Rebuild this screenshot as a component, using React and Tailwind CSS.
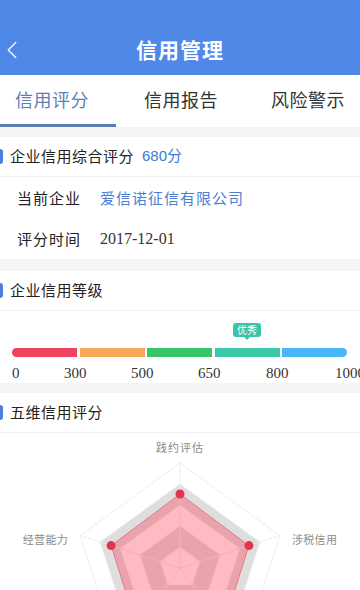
import { ChevronLeft } from "lucide-react";

const cjk = "font-['Noto_Sans_CJK_SC',sans-serif]";
const serif = "font-['Liberation_Serif','Noto_Sans_CJK_SC',serif]";

function SectionTitle({ children }) {
  return (
    <div className="flex items-center h-[40px] border-b border-[#f0f0f0]">
      <div className="w-[3px] h-[15px] bg-[#4a7fe0] rounded-r-sm" />
      <div className="ml-[7px] flex items-center text-[15px] text-[#222]">{children}</div>
    </div>
  );
}

const cx = 180;
const cy = 135;
const R = 105;
const angles = [-90, -18, 54, 126, 198].map((a) => (a * Math.PI) / 180);

function ring(k) {
  return angles
    .map((a) => `${(cx + R * k * Math.cos(a)).toFixed(1)},${(cy + R * k * Math.sin(a)).toFixed(1)}`)
    .join(" ");
}

function band(inner, outer) {
  // outer ring then inner ring, filled with evenodd
  return `M${ring(outer).split(" ").join(" L")} Z M${ring(inner).split(" ").join(" L")} Z`;
}

const data = [0.705, 0.69, 0.7, 0.7, 0.69];

function Radar() {
  const pts = data.map((v, i) => [cx + R * v * Math.cos(angles[i]), cy + R * v * Math.sin(angles[i])]);
  return (
    <svg width="360" height="158" className="block">
      <path d={band(0.2, 0.4)} fill="#dedede" fillRule="evenodd" />
      <path d={band(0.6, 0.8)} fill="#dedede" fillRule="evenodd" />
      {[0.2, 0.4, 0.6, 0.8, 1].map((k) => (
        <polygon key={k} points={ring(k)} fill="none" stroke="#eeeeee" strokeWidth="1" />
      ))}
      {angles.map((a, i) => (
        <line key={i} x1={cx} y1={cy} x2={cx + R * Math.cos(a)} y2={cy + R * Math.sin(a)} stroke="#eeeeee" strokeWidth="1" />
      ))}
      <polygon
        points={pts.map((p) => p.join(",")).join(" ")}
        fill="rgba(255,40,70,0.32)"
        stroke="rgba(230,60,80,0.5)"
        strokeWidth="1"
      />
      {pts.map((p, i) => (
        <circle key={i} cx={p[0]} cy={p[1]} r="4.5" fill="#e3334d" />
      ))}
      <text x="180" y="19" textAnchor="middle" fontSize="11" fill="#8a8a8a" letterSpacing="1" fontFamily="Noto Sans CJK SC, sans-serif">践约评估</text>
      <text x="68" y="111" textAnchor="end" fontSize="11" fill="#8a8a8a" letterSpacing="0.3" fontFamily="Noto Sans CJK SC, sans-serif">经营能力</text>
      <text x="292" y="111" fontSize="11" fill="#8a8a8a" letterSpacing="0.3" fontFamily="Noto Sans CJK SC, sans-serif">涉税信用</text>
    </svg>
  );
}

const segs = ["bg-[#f0435f] rounded-l-full", "bg-[#f8a65a]", "bg-[#37c46a]", "bg-[#3dc9a8]", "bg-[#49b6f5] rounded-r-full"];
const ticks = [
  ["0", "w-[52px]"],
  ["300", "w-[67px]"],
  ["500", "w-[67px]"],
  ["650", "w-[68px]"],
  ["800", "w-[69px]"],
  ["1000", ""],
];

export default function App() {
  return (
    <div className={`w-[360px] h-[590px] overflow-hidden bg-[#f5f5f5] ${cjk}`}>
      {/* Header */}
      <div className="h-[75px] bg-[#5088e8] pt-[25px] flex items-center relative">
        <ChevronLeft size={30} strokeWidth={1.2} className="text-white/90 ml-[-3px]" />
        <div className="absolute left-0 right-0 top-[25px] h-[50px] flex items-center justify-center text-white text-[21px] font-bold tracking-[1px]">
          信用管理
        </div>
      </div>

      {/* Tabs */}
      <div className="bg-white h-[52px] flex flex-col">
        <div className="flex-1 flex items-center pl-[15px] text-[18px] tracking-[0.5px]">
          <span className="text-[#5b80b8]">信用评分</span>
          <span className="ml-[55px] text-[#333]">信用报告</span>
          <span className="ml-[53px] text-[#333]">风险警示</span>
        </div>
        <div className="w-[116px] h-[3px] bg-[#5a7eb4]" />
      </div>

      {/* Section 1 */}
      <div className="mt-[10px] bg-white">
        <SectionTitle>
          <span className="tracking-[0.5px]">企业信用综合评分</span>
          <span className="ml-[8px] text-[#3d7ad6] font-['Liberation_Sans','Noto_Sans_CJK_SC',sans-serif]">680分</span>
        </SectionTitle>
        <div className="flex items-center h-[42px] pl-[17px] text-[15px]">
          <span className="w-[83px] text-[#222] tracking-[1px]">当前企业</span>
          <span className="text-[#4a7fd4] tracking-[1px]">爱信诺征信有限公司</span>
        </div>
        <div className="flex items-center h-[40px] pl-[17px] text-[15px]">
          <span className="w-[83px] text-[#222] tracking-[1px]">评分时间</span>
          <span className={`text-[16px] text-[#333] ${serif}`}>2017-12-01</span>
        </div>
      </div>

      {/* Section 2 */}
      <div className="mt-[12px] bg-white h-[112px]">
        <SectionTitle>
          <span className="tracking-[0.5px]">企业信用等级</span>
        </SectionTitle>
        <div className="pt-[12px]">
          <div className="ml-[233px] w-[28px] flex flex-col items-center">
            <div className="w-[28px] h-[14px] rounded-[3px] bg-[#3cc4a6] text-white text-[10px] leading-[14px] text-center">
              优秀
            </div>
            <div className="w-0 h-0 border-l-[3px] border-r-[3px] border-t-[3px] border-l-transparent border-r-transparent border-t-[#3cc4a6]" />
          </div>
          <div className="mt-[8px] ml-[12px] w-[335px] h-[9px] flex gap-[2.5px]">
            {segs.map((c, i) => (
              <div key={i} className={`flex-1 ${c}`} />
            ))}
          </div>
          <div className={`mt-[7px] pl-[12px] flex whitespace-nowrap text-[15px] text-[#333] leading-[18px] ${serif}`}>
            {ticks.map(([t, w]) => (
              <span key={t} className={`shrink-0 ${w}`}>{t}</span>
            ))}
          </div>
        </div>
      </div>

      {/* Section 3 */}
      <div className="mt-[10px] bg-white">
        <SectionTitle>
          <span className="tracking-[0.5px]">五维信用评分</span>
        </SectionTitle>
        <Radar />
      </div>
    </div>
  );
}
